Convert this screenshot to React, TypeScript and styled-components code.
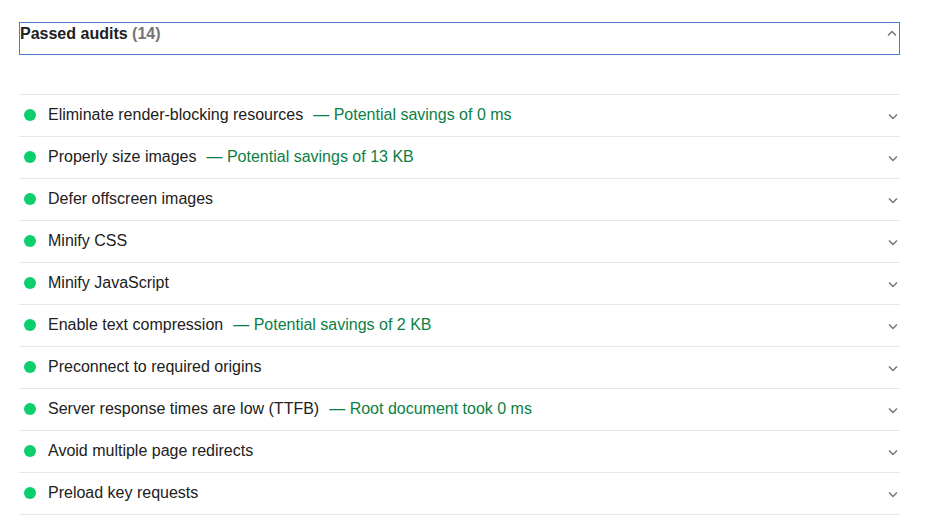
import React from "react";
import styled, { createGlobalStyle } from "styled-components";

const Global = createGlobalStyle`
  html, body { margin: 0; padding: 0; background: #fff; }
  body { font-family: "Liberation Sans", Arial, sans-serif; color: #212121; }
`;

const Page = styled.div`
  padding: 22px 29px 0 19px;
  width: 881px;
`;

const Header = styled.div`
  box-sizing: border-box;
  height: 33px;
  border: 1px solid #4f7ec9;
  display: flex;
  align-items: flex-start;
  justify-content: space-between;
  padding: 2px 1px 0 0;
  margin-bottom: 39px;
`;

const Title = styled.span`
  font-size: 16px;
  font-weight: bold;
  color: #212121;
  line-height: 18px;
`;

const Count = styled.span`
  color: #757575;
`;

const List = styled.div`
  border-top: 1px solid #e6e6e6;
`;

const Row = styled.div`
  box-sizing: border-box;
  height: 42px;
  border-bottom: 1px solid #e6e6e6;
  display: flex;
  align-items: center;
  padding: 0 5px 2px 5px;
  font-size: 16px;
`;

const Dot = styled.span`
  width: 12px;
  height: 12px;
  border-radius: 50%;
  background: #0cce6b;
  flex: none;
  margin-right: 12px;
  margin-top: 1px;
`;

const Label = styled.span`
  color: #212121;
  white-space: nowrap;
`;

const Savings = styled.span`
  color: #0b7f45;
  margin-left: 10px;
  white-space: nowrap;
`;

const Spacer = styled.span`
  flex: 1;
`;

const Chevron = ({ up }: { up?: boolean }) => (
  <svg width="10" height="7" viewBox="0 0 10 7" style={{ flex: "none" }}>
    <path
      d={up ? "M1 5.5 L5 1.5 L9 5.5" : "M1 1.5 L5 5.5 L9 1.5"}
      fill="none"
      stroke="#757575"
      strokeWidth="1.5"
    />
  </svg>
);

const HeaderChevron = styled.span`
  margin-top: 5px;
  margin-right: 1px;
  display: flex;
`;

const RowChevron = styled.span`
  display: flex;
  margin-right: -3px;
  margin-top: 4px;
`;

const audits: { label: string; savings?: string }[] = [
  { label: "Eliminate render-blocking resources", savings: "— Potential savings of 0 ms" },
  { label: "Properly size images", savings: "— Potential savings of 13 KB" },
  { label: "Defer offscreen images" },
  { label: "Minify CSS" },
  { label: "Minify JavaScript" },
  { label: "Enable text compression", savings: "— Potential savings of 2 KB" },
  { label: "Preconnect to required origins" },
  { label: "Server response times are low (TTFB)", savings: "— Root document took 0 ms" },
  { label: "Avoid multiple page redirects" },
  { label: "Preload key requests" },
];

export default function App() {
  return (
    <>
      <Global />
      <Page>
        <Header>
          <Title>
            Passed audits <Count>(14)</Count>
          </Title>
          <HeaderChevron>
            <Chevron up />
          </HeaderChevron>
        </Header>
        <List>
          {audits.map((a) => (
            <Row key={a.label}>
              <Dot />
              <Label>{a.label}</Label>
              {a.savings && <Savings>{a.savings}</Savings>}
              <Spacer />
              <RowChevron>
                <Chevron />
              </RowChevron>
            </Row>
          ))}
        </List>
      </Page>
    </>
  );
}
